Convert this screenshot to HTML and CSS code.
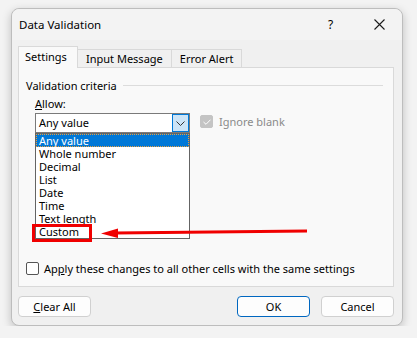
FILE: index.html
```html
<!DOCTYPE html>
<html>
<head>
    <meta charset="UTF-8">
    <link rel="stylesheet" href="styles.css">
</head>
<body>
    <div class="dialog">
        <div class="titlebar">
            <div class="title">Data Validation</div>
            <div class="help">?</div>
            <div class="close">
                <svg width="11" height="11" viewBox="0 0 11 11"><path d="M0.5 0.5 L10.5 10.5 M10.5 0.5 L0.5 10.5" stroke="#1a1a1a" stroke-width="1.1" fill="none"/></svg>
            </div>
        </div>

        <div class="tabs">
            <div class="tab tab-active">Settings</div>
            <div class="tab">Input Message</div>
            <div class="tab">Error Alert</div>
        </div>

        <div class="panel">
            <div class="group-head">
                <span>Validation criteria</span>
                <div class="rule"></div>
            </div>

            <div class="allow-label"><u>A</u>llow:</div>

            <div class="allow-row">
                <div class="combo">
                    <div class="combo-text">Any value</div>
                    <div class="combo-btn">
                        <svg width="9" height="5" viewBox="0 0 9 5"><path d="M0.5 0.5 L4.5 4.5 L8.5 0.5" stroke="#333" stroke-width="1" fill="none"/></svg>
                    </div>
                    <ul class="listbox">
                        <li class="selected">Any value</li>
                        <li>Whole number</li>
                        <li>Decimal</li>
                        <li>List</li>
                        <li>Date</li>
                        <li>Time</li>
                        <li>Text length</li>
                        <li>Custom</li>
                    </ul>
                </div>
                <div class="check check-disabled">
                    <span class="box box-checked">
                        <svg width="8" height="6" viewBox="0 0 8 6"><path d="M0.5 3 L3 5.3 L7.5 0.7" stroke="#fff" stroke-width="1" fill="none"/></svg>
                    </span>
                    <span>Ignore blank</span>
                </div>
            </div>

            <div class="check apply">
                <span class="box"></span>
                <span>Ap<u>p</u>ly these changes to all other cells with the same settings</span>
            </div>
        </div>

        <div class="buttons">
            <button class="btn"><u>C</u>lear All</button>
            <div class="btn-gap"></div>
            <button class="btn btn-default">OK</button>
            <button class="btn">Cancel</button>
        </div>

        <!-- annotation drawn over the screenshot -->
        <svg class="annotation" width="392" height="317" viewBox="0 0 392 317">
            <rect x="22.5" y="217.5" width="57" height="15" fill="none" stroke="#f00000" stroke-width="3"/>
            <path d="M104 225 L296 223" stroke="#f00000" stroke-width="3" fill="none"/>
            <polygon points="90,225.5 107,220.5 107,230" fill="#f00000"/>
        </svg>
    </div>
</body>
</html>
```

FILE: styles.css
```css
body {
    margin: 0;
    padding: 8px 14px 0 11px;
    background: #f3f3f3;
    font-family: "Noto Sans", "Open Sans", sans-serif;
    font-size: 11px;
    color: #000;
}

.dialog {
    position: relative;
    width: 390px;
    height: 316px;
    background: #f0f0f0;
    border: 1px solid #bdbdbd;
    border-radius: 8px;
    box-shadow: 0 3px 10px rgba(0, 0, 0, 0.22);
}

.titlebar {
    display: flex;
    align-items: center;
    height: 31px;
    padding: 0 0 0 7px;
    background: #f3f3f3;
    border-radius: 8px 8px 0 0;
}

.title {
    flex: 1;
    font-size: 11.5px;
}

.help {
    width: 14px;
    margin-right: 32px;
    font-size: 12px;
}

.close {
    width: 11px;
    height: 11px;
    margin-right: 17px;
    display: flex;
}

.tabs {
    display: flex;
    align-items: flex-end;
    height: 21px;
    margin-top: 6px;
    padding-left: 6px;
}

.tab {
    height: 17px;
    padding: 0 8px;
    line-height: 17px;
    border: 1px solid #d9d9d9;
    border-bottom: none;
    border-left: none;
    background: #f0f0f0;
}

.tab-active {
    width: 46px;
    height: 21px;
    line-height: 19px;
    padding: 0 6px;
    margin-bottom: -1px;
    border-left: 1px solid #d9d9d9;
    background: #f9f9f9;
    position: relative;
    z-index: 1;
}

.panel {
    display: flex;
    flex-direction: column;
    height: 218px;
    margin: 0 8px 0 6px;
    padding: 0 7px;
    background: #f9f9f9;
    border: 1px solid #d9d9d9;
}

.group-head {
    display: flex;
    align-items: center;
    gap: 6px;
    margin-top: 9px;
    height: 16px;
}

.rule {
    flex: 1;
    height: 1px;
    margin-right: 3px;
    background: #dcdcdc;
}

.allow-label {
    margin: 3px 0 0 9px;
    height: 16px;
    line-height: 16px;
}

.allow-row {
    display: flex;
    align-items: flex-start;
    margin: 1px 0 0 9px;
}

.combo {
    position: relative;
    display: flex;
    width: 153px;
    height: 18px;
    border: 1px solid #7a7a7a;
    background: #fff;
}

.combo-text {
    flex: 1;
    padding-left: 3px;
    line-height: 18px;
}

.combo-btn {
    display: flex;
    align-items: center;
    justify-content: center;
    box-sizing: border-box;
    width: 17px;
    height: 18px;
    background: #cce4f7;
    border: 1px solid #0078d7;
}

.listbox {
    position: absolute;
    left: -1px;
    top: 19px;
    width: 153px;
    margin: 0;
    padding: 0;
    list-style: none;
    background: #fff;
    border: 1px solid #646464;
    z-index: 2;
}

.listbox li {
    height: 13px;
    line-height: 13px;
    padding-left: 3px;
}

.listbox li.selected {
    background: #0078d7;
    color: #fff;
    outline: 1px dotted #e8a040;
    outline-offset: -1px;
}

.check {
    display: flex;
    align-items: center;
    gap: 6px;
}

.box {
    width: 11px;
    height: 11px;
    border: 1px solid #555;
    border-radius: 2px;
    background: #fff;
    display: flex;
    align-items: center;
    justify-content: center;
}

.check-disabled {
    margin: 1px 0 0 10px;
    color: #8a8a8a;
}

.box-checked {
    border-color: #c4c4c4;
    background: #c4c4c4;
}

.apply {
    margin-top: auto;
    margin-bottom: 10px;
    gap: 5px;
}

.buttons {
    display: flex;
    gap: 10px;
    margin: 9px 8px 0 6px;
}

.btn-gap {
    flex: 1;
}

.btn {
    width: 73px;
    height: 21px;
    padding: 0;
    font-family: inherit;
    font-size: 11px;
    color: #000;
    background: #fdfdfd;
    border: 1px solid #d0d0d0;
    border-radius: 4px;
}

.btn-default {
    border: 1px solid #0067c0;
    margin-right: 1px;
}

.annotation {
    position: absolute;
    left: -1px;
    top: -1px;
    pointer-events: none;
    z-index: 3;
}
```
